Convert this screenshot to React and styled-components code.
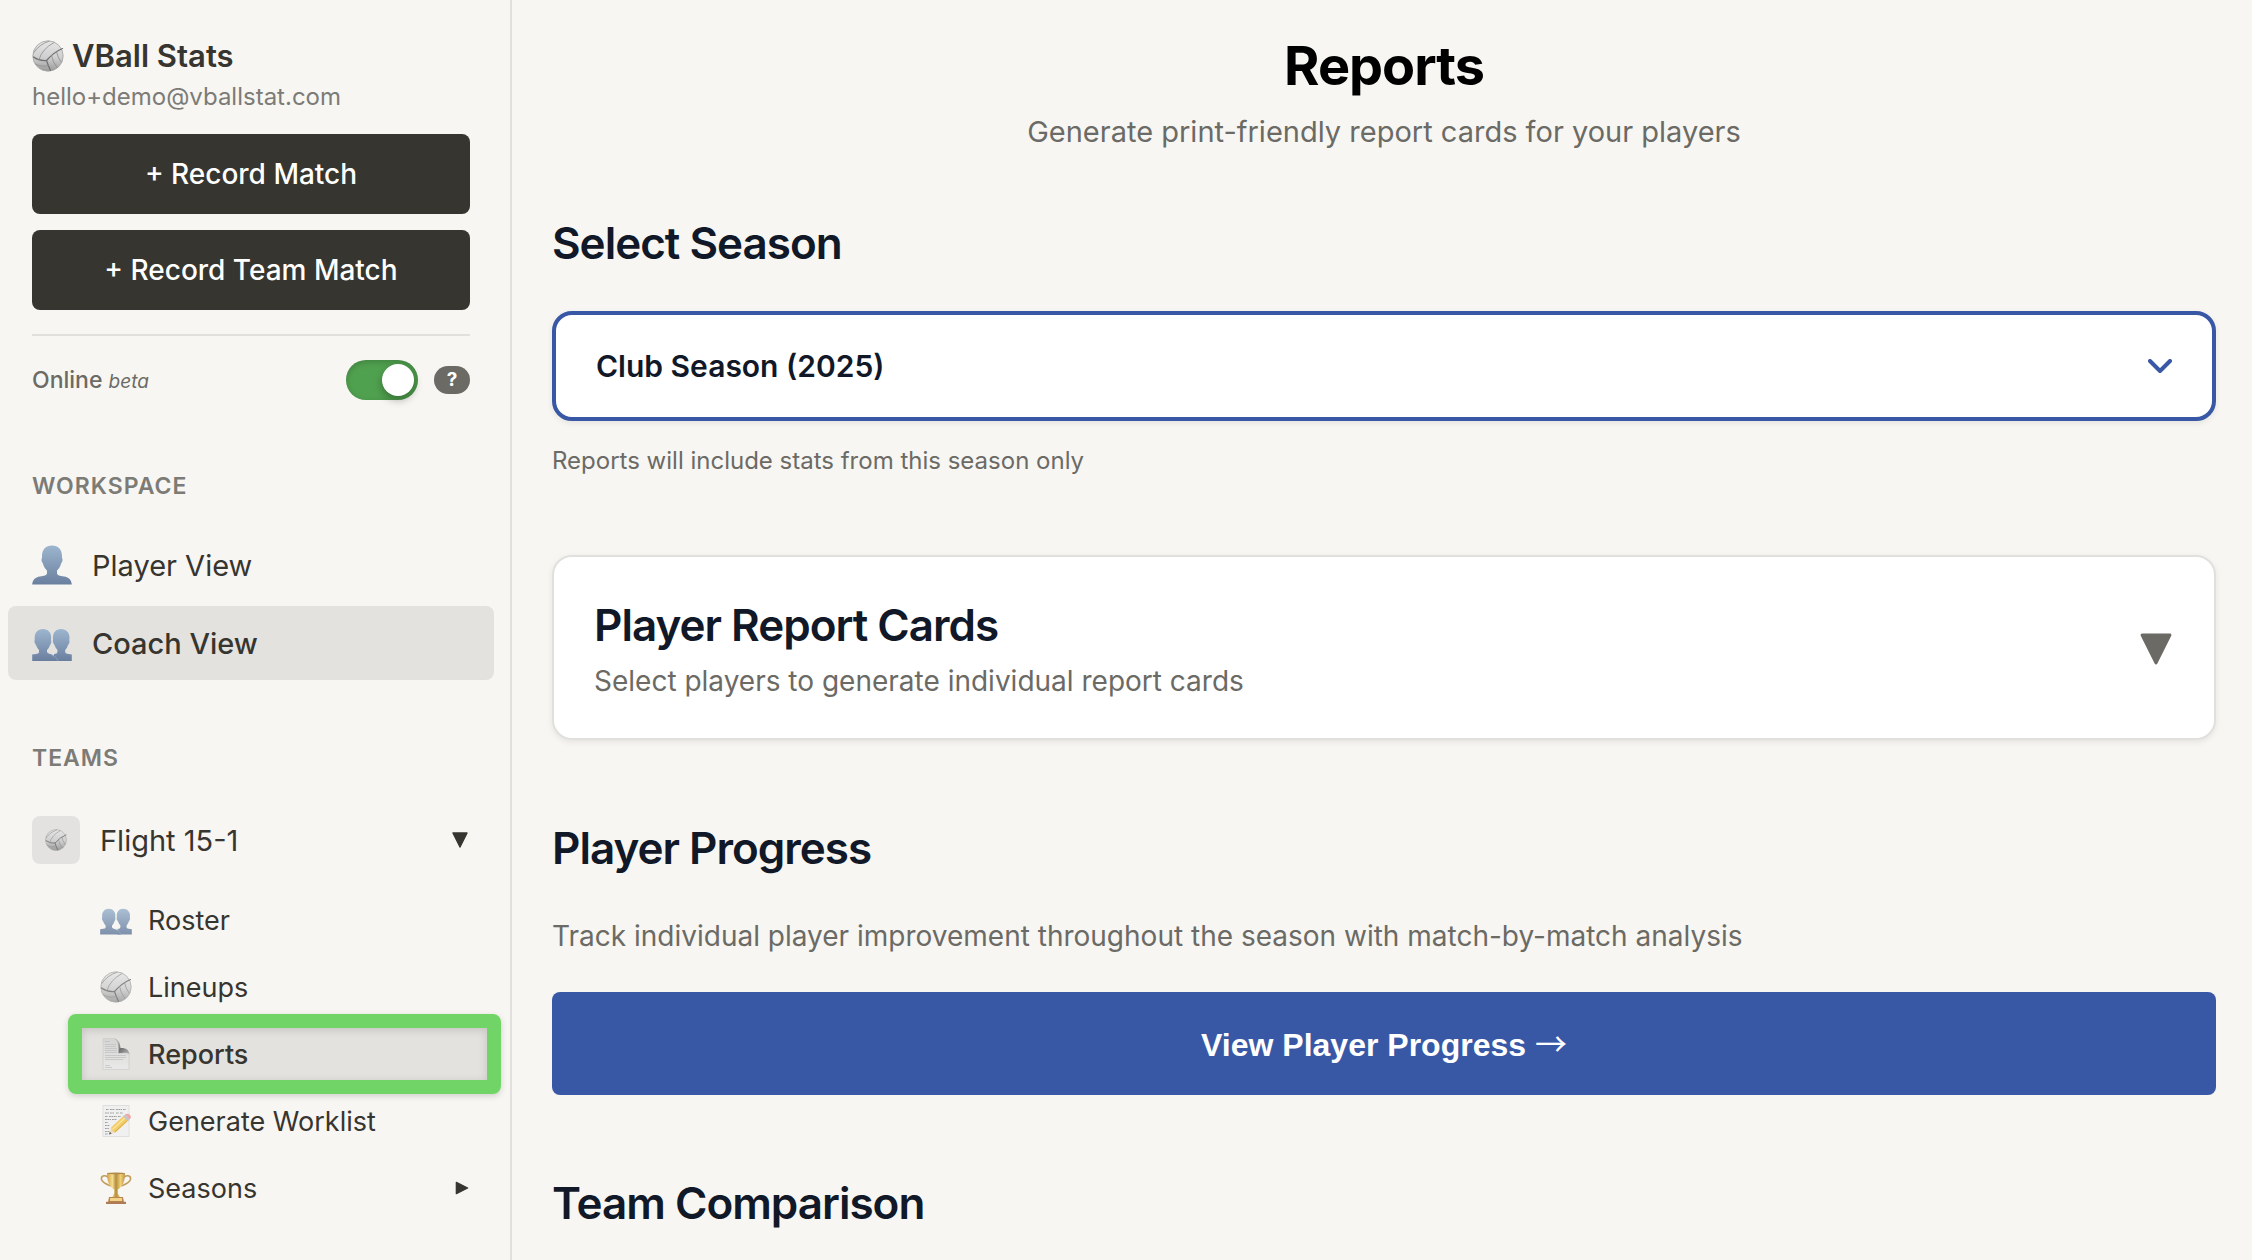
import React, { useState } from "react";
import styled, { createGlobalStyle, css } from "styled-components";

const GlobalStyle = createGlobalStyle`
  * {
    box-sizing: border-box;
  }

  body {
    margin: 0;
    background: #f7f6f3;
    color: #37352f;
    font-family: Inter, "Liberation Sans", sans-serif;
  }

  h1, h2, p, ul {
    margin: 0;
    padding: 0;
  }

  button, select {
    font-family: inherit;
    cursor: pointer;
  }
`;

// Icons
const BallIcon = ({ size }) => (
  <svg width={size} height={size} viewBox="0 0 32 32" aria-hidden="true">
    <defs>
      <linearGradient id="ball" x1="0" y1="0" x2="0" y2="1">
        <stop offset="0" stopColor="#e6e6e6" />
        <stop offset="0.55" stopColor="#cfcfcf" />
        <stop offset="1" stopColor="#9a9a9a" />
      </linearGradient>
    </defs>
    <circle cx="16" cy="16" r="15.2" fill="url(#ball)" stroke="#a3a3a3" strokeWidth="0.8" />
    <g fill="none" strokeLinecap="round">
      <path
        d="M1.5 17 Q8 21.5 14.5 20.5 Q22 12 30.5 8.5 M14.5 20.5 Q16 25 18.5 30.5"
        stroke="#6f6f6f"
        strokeWidth="1.2"
      />
      <path
        d="M7 19.5 Q10 9 22 2.5 M1.8 12.5 Q7 4.5 17 1.2 M19.5 15.5 Q20.5 22 25 27.5 M24.5 11.8 Q25.5 17 29 22 M3.5 24 Q9 27.5 16.5 25.5"
        stroke="#8b8b8b"
        strokeWidth="0.8"
      />
    </g>
  </svg>
);

const PersonIcon = ({ size }) => (
  <svg width={size} height={size} viewBox="0 0 40 40" aria-hidden="true">
    <defs>
      <linearGradient id="person" x1="0" y1="0" x2="0" y2="40" gradientUnits="userSpaceOnUse">
        <stop offset="0" stopColor="#9db6cf" />
        <stop offset="1" stopColor="#6a7f9e" />
      </linearGradient>
    </defs>
    <path
      d="M20 0.5C26 0.5 30 4.5 30 11L30 13C31 14 30.6 17 29.2 18.3C28.3 22 26.5 24 25 25.5L25 28C25 30.5 28 31 32 31.5C37 32.2 39.5 35 39.8 39.5L0.2 39.5C0.5 35 3 32.2 8 31.5C12 31 15 30.5 15 28L15 25.5C13.5 24 11.7 22 10.8 18.3C9.4 17 9 14 10 13L10 11C10 4.5 14 0.5 20 0.5Z"
      fill="url(#person)"
    />
  </svg>
);

const PeopleIcon = ({ size }) => (
  <svg width={size} height={size} viewBox="0 0 40 40" aria-hidden="true">
    <defs>
      <linearGradient id="people" x1="0" y1="6" x2="0" y2="38" gradientUnits="userSpaceOnUse">
        <stop offset="0" stopColor="#9db6cf" />
        <stop offset="1" stopColor="#6a7f9e" />
      </linearGradient>
    </defs>
    <g fill="url(#people)">
      <path d="M29 6C34 6 37.5 9.5 37.5 14.5L37.3 17C38 19 37 21 36 22C35 25 34 26 33.2 27L33.2 29C33.5 31 37 31 39.8 31.5L39.8 38L22 38L22 31C25 31 25.5 30 25.5 28L25.5 27C24 25.5 23 23.5 22.5 22C21 20 20.5 18.5 21 17L21 14.5C21 9.5 24 6 29 6Z" />
      <path d="M11 6C16 6 19.2 9.5 19.2 14.5L19 17C19.7 19 19 21 18 22C17 25 16 26 15 27L15 29C15.5 31.5 24 31 26.5 38L0.2 38L0.2 31.5C4 31 7 31 7 29L7 27C5.5 25.5 4.5 23.5 4 22C2.5 20 2 18.5 2.7 17L2.7 14.5C2.7 9.5 6 6 11 6Z" />
    </g>
    <path d="M19 31.5C22.5 33 25 35 26 38" fill="none" stroke="#91a8c4" strokeWidth="0.7" />
  </svg>
);

const PageIcon = ({ size }) => (
  <svg width={size} height={size} viewBox="0 0 32 32" aria-hidden="true">
    <defs>
      <linearGradient id="curl" x1="0" y1="0" x2="1" y2="1">
        <stop offset="0.2" stopColor="#b5b5b5" />
        <stop offset="0.55" stopColor="#5e5e5e" />
        <stop offset="1" stopColor="#b0b0b0" />
      </linearGradient>
      <linearGradient id="page" x1="0" y1="0" x2="0" y2="1">
        <stop offset="0" stopColor="#d3d3d3" />
        <stop offset="1" stopColor="#ebebeb" />
      </linearGradient>
    </defs>
    <path d="M3 0.5H15Q19 4 19 15H29V31.5H3Z" fill="url(#page)" stroke="#cbcbcb" strokeWidth="0.8" />
    <path
      d="M5 3.5H10M5 6.5H16M5 8.5H16M5 10.5H17M5 12.5H17M5 14.5H17M5 17.5H26M5 19.5H26M5 21.5H23M5 27.5H10M5 29.5H12"
      stroke="#bdbdbd"
      strokeWidth="0.8"
    />
    <path
      d="M14 0.5C18 1 20 4 20.5 10C25 9.5 29 11.5 29.5 16C26 14 23 14.8 18.5 15.3C19 9 18.5 3 14 0.5Z"
      fill="url(#curl)"
    />
  </svg>
);

const MemoIcon = ({ size }) => (
  <svg width={size} height={size} viewBox="0 0 32 32" aria-hidden="true">
    <rect x="3" y="0.5" width="26" height="31" fill="#f0f0f0" stroke="#d6d6d6" strokeWidth="0.8" />
    <path
      d="M6 4.5h3m1 0h5m1 0h6m1 0h3M5 8h4m1 0h4m2 0h3m1 0h3M5 11.5h3m1 0h8m1 0h3M5 14.5h6m1 0h5M5 17.5h3M5 20.5h5M5 23.5h4M5 26.5h5M5 29h3"
      fill="none"
      stroke="#8f8f8f"
      strokeWidth="1.1"
      strokeDasharray="1.8 0.6"
    />
    <path d="M9 29.5L11 22.5L15.5 27.5Z" fill="#ead9bd" />
    <path d="M9 29.5L9.8 26.8L11.7 28.7Z" fill="#444" />
    <path d="M11 22.5L24 10.5L28.5 15.5L15.5 27.5Q12.5 27 11 22.5Z" fill="#f2c64e" />
    <path d="M12.5 24.5L25.7 12.3" stroke="#fbe28f" strokeWidth="1.5" />
    <path d="M15 26.8L28 14.9" stroke="#cf9a32" strokeWidth="0.9" />
    <path d="M23.2 11.2L25 9.5L29.5 14.5L27.7 16.2Z" fill="#b9bcc0" />
    <path d="M25 9.5Q27.5 7.8 30 10Q32 12.5 29.5 14.5Z" fill="#ef9a9d" />
  </svg>
);

const TrophyIcon = ({ size }) => (
  <svg width={size} height={size} viewBox="0 0 32 32" aria-hidden="true">
    <defs>
      <linearGradient id="cup" x1="0" y1="0" x2="1" y2="0">
        <stop offset="0" stopColor="#c8922b" />
        <stop offset="0.3" stopColor="#f6da7c" />
        <stop offset="0.5" stopColor="#a87a1f" />
        <stop offset="0.75" stopColor="#efcb62" />
        <stop offset="1" stopColor="#b9832a" />
      </linearGradient>
    </defs>
    <path
      d="M8 5C4 2.5 0.8 4 1.5 7.5C2.2 10.5 6 12 10.5 14M24 5C28 2.5 31.2 4 30.5 7.5C29.8 10.5 26 12 21.5 14"
      fill="none"
      stroke="#b88c40"
      strokeWidth="1.5"
    />
    <path
      d="M7 1H25C25 9 23 14.5 17.8 17.5V21.5L20 25H12L14.2 21.5V17.5C9 14.5 7 9 7 1Z"
      fill="url(#cup)"
    />
    <ellipse cx="16" cy="1.4" rx="9" ry="0.9" fill="#a5782a" />
    <path d="M9 25H23L24 30H8Z" fill="#b0713a" />
    <rect x="10" y="26" width="12" height="3" fill="#f0cf74" />
    <rect x="6" y="29.8" width="20" height="2.2" fill="#a2663a" />
  </svg>
);

const Triangle = ({ size, right }) => (
  <svg width={size} height={size} viewBox="0 0 16 16" aria-hidden="true">
    <path
      d={right ? "M1.5 1.5L14.5 8L1.5 14.5Z" : "M1 1L15 1L8 15Z"}
      fill="currentColor"
      stroke="currentColor"
      strokeWidth="1.4"
      strokeLinejoin="round"
    />
  </svg>
);

const ChevronIcon = () => (
  <svg width="24" height="14" viewBox="0 0 24 14" aria-hidden="true">
    <path
      d="M2 2L12 12L22 2"
      fill="none"
      stroke="#3858a6"
      strokeWidth="4"
      strokeLinecap="round"
      strokeLinejoin="round"
    />
  </svg>
);

const workspaces = [
  { name: "Player View", icon: PersonIcon },
  { name: "Coach View", icon: PeopleIcon, active: true },
];

const teamLinks = [
  { name: "Roster", icon: PeopleIcon },
  { name: "Lineups", icon: BallIcon },
  { name: "Reports", icon: PageIcon, active: true },
  { name: "Generate Worklist", icon: MemoIcon },
  { name: "Seasons", icon: TrophyIcon, expandable: true },
];

const Sidebar = () => {
  const [online, setOnline] = useState(true);

  return (
    <SidebarAside>
      <Brand>
        <BallIcon size={32} />
        VBall Stats
      </Brand>
      <Email>hello+demo@vballstat.com</Email>
      <RecordButtons>
        <RecordButton type="button">+ Record Match</RecordButton>
        <RecordButton type="button">+ Record Team Match</RecordButton>
      </RecordButtons>
      <OnlineRow>
        <OnlineLabel htmlFor="online">
          Online <em>beta</em>
        </OnlineLabel>
        <Toggle
          id="online"
          type="checkbox"
          checked={online}
          onChange={() => setOnline(!online)}
        />
        <HelpButton type="button" aria-label="About online mode">
          ?
        </HelpButton>
      </OnlineRow>
      <nav>
        <NavHeading>WORKSPACE</NavHeading>
        <WorkspaceList>
          {workspaces.map(({ name, icon: Icon, active }) => (
            <li key={name}>
              <WorkspaceLink href="#" $active={active}>
                <Icon size={40} />
                {name}
              </WorkspaceLink>
            </li>
          ))}
        </WorkspaceList>
        <NavHeading>TEAMS</NavHeading>
        <TeamButton type="button" aria-expanded="true">
          <TeamBadge>
            <BallIcon size={22} />
          </TeamBadge>
          <span>Flight 15-1</span>
          <Triangle size={16} />
        </TeamButton>
        <TeamList>
          {teamLinks.map(({ name, icon: Icon, active, expandable }) => (
            <li key={name}>
              <TeamLink href="#" $active={active}>
                <Icon size={32} />
                <span>{name}</span>
                {expandable && <Triangle size={14} right />}
              </TeamLink>
            </li>
          ))}
        </TeamList>
      </nav>
    </SidebarAside>
  );
};

const App = () => {
  return (
    <Layout>
      <GlobalStyle />
      <Sidebar />
      <Main>
        <PageTitle>Reports</PageTitle>
        <PageSubtitle>
          Generate print-friendly report cards for your players
        </PageSubtitle>
        <SeasonSection>
          <SectionTitle as="label" htmlFor="season">
            Select Season
          </SectionTitle>
          <SelectWrap>
            <SeasonSelect id="season" defaultValue="club-2025">
              <option value="club-2025">Club Season (2025)</option>
            </SeasonSelect>
            <ChevronIcon />
          </SelectWrap>
          <Hint>Reports will include stats from this season only</Hint>
        </SeasonSection>
        <CardButton type="button" aria-expanded="false">
          <CardText>
            <SectionTitle as="span">Player Report Cards</SectionTitle>
            <Description as="span">
              Select players to generate individual report cards
            </Description>
          </CardText>
          <Triangle size={32} />
        </CardButton>
        <Section>
          <SectionTitle>Player Progress</SectionTitle>
          <Description>
            Track individual player improvement throughout the season with
            match-by-match analysis
          </Description>
          <ProgressButton type="button">
            View Player Progress <Arrow>→</Arrow>
          </ProgressButton>
        </Section>
        <Section>
          <SectionTitle>Team Comparison</SectionTitle>
        </Section>
      </Main>
    </Layout>
  );
};

const Layout = styled.div`
  display: flex;
  min-height: 100vh;
`;

const SidebarAside = styled.aside`
  flex: 0 0 512px;
  padding: 32px 40px 24px 32px;
  border-right: 2px solid #e1e0dd;
`;

const Brand = styled.p`
  display: flex;
  align-items: center;
  gap: 8px;
  font-size: 31px;
  font-weight: 600;
  line-height: 48px;
`;

const Email = styled.p`
  color: #7c7b76;
  font-size: 24px;
  line-height: 34px;
`;

const RecordButtons = styled.div`
  display: flex;
  flex-direction: column;
  gap: 16px;
  margin-top: 20px;
  padding-bottom: 24px;
  border-bottom: 2px solid #e1e0dd;
`;

const RecordButton = styled.button`
  padding: 20px;
  border: none;
  border-radius: 8px;
  background: #37352f;
  color: #fff;
  font-size: 28px;
  font-weight: 500;
  line-height: 40px;
`;

const OnlineRow = styled.div`
  display: flex;
  align-items: center;
  gap: 16px;
  height: 64px;
  padding-top: 24px;
`;

const OnlineLabel = styled.label`
  flex: 1;
  color: #6b6a65;
  font-size: 23px;
  font-weight: 500;

  > em {
    font-size: 19px;
    font-weight: 400;
  }
`;

const Toggle = styled.input`
  appearance: none;
  width: 72px;
  height: 40px;
  margin: 0;
  padding: 4px;
  border-radius: 20px;
  background: #b9b8b4;
  box-shadow: inset 0 2px 6px rgba(0, 0, 0, 0.2);
  cursor: pointer;

  &::before {
    content: "";
    display: block;
    width: 32px;
    height: 32px;
    border-radius: 50%;
    background: #fff;
    box-shadow: 0 4px 8px rgba(0, 0, 0, 0.3);
  }

  &:checked {
    background: #50a14f;
  }

  &:checked::before {
    margin-left: auto;
  }
`;

const HelpButton = styled.button`
  width: 36px;
  height: 28px;
  padding: 0;
  border: none;
  border-radius: 14px;
  background: #6b6a65;
  color: #fff;
  font-size: 19px;
  font-weight: 700;
  line-height: 28px;
`;

const NavHeading = styled.h2`
  margin: 61px 0 25px;
  color: #7c7b76;
  font-size: 23px;
  font-weight: 600;
  letter-spacing: 1px;
  line-height: 34px;

  &:first-child {
    margin-top: 69px;
  }
`;

const WorkspaceList = styled.ul`
  display: flex;
  flex-direction: column;
  gap: 4px;
  margin: 0 -24px;
  list-style: none;
`;

const WorkspaceLink = styled.a`
  display: flex;
  align-items: center;
  gap: 20px;
  height: 74px;
  padding: 0 24px;
  border-radius: 8px;
  color: inherit;
  font-size: 29px;
  text-decoration: none;

  ${({ $active }) =>
    $active &&
    css`
      background: #e3e2de;
      font-weight: 500;
    `}
`;

const TeamButton = styled.button`
  display: flex;
  align-items: center;
  gap: 20px;
  width: 100%;
  height: 80px;
  padding: 0 2px 0 0;
  border: none;
  background: none;
  color: inherit;
  font-size: 29px;
  text-align: left;

  > span:nth-child(2) {
    flex: 1;
  }
`;

const TeamBadge = styled.span`
  display: flex;
  align-items: center;
  justify-content: center;
  width: 48px;
  height: 48px;
  border-radius: 8px;
  background: #e3e2e0;
`;

const TeamList = styled.ul`
  display: flex;
  flex-direction: column;
  gap: 3px;
  margin: 8px -23px 0 44px;
  list-style: none;
`;

const TeamLink = styled.a`
  position: relative;
  display: flex;
  align-items: center;
  gap: 16px;
  height: 64px;
  padding: 0 24px;
  color: inherit;
  font-size: 27px;
  text-decoration: none;

  > span {
    flex: 1;
  }

  > svg:first-child {
    opacity: 0.85;
  }

  ${({ $active }) =>
    $active &&
    css`
      background: #e3e2de;
      font-weight: 500;

      &::after {
        content: "";
        position: absolute;
        inset: -8px;
        border: 14px solid #71d466;
        border-radius: 8px;
        box-shadow: 0 2px 6px rgba(0, 0, 0, 0.16),
          inset 0 2px 8px rgba(0, 0, 0, 0.14);
      }
    `}
`;

const Main = styled.main`
  flex: 1;
  min-width: 0;
  padding: 32px 36px 30px 40px;
`;

const PageTitle = styled.h1`
  color: #000;
  font-size: 54px;
  font-weight: 700;
  letter-spacing: -1px;
  line-height: 68px;
  text-align: center;
`;

const PageSubtitle = styled.p`
  margin-top: 10px;
  color: #6b6a65;
  font-size: 29px;
  line-height: 44px;
  text-align: center;
`;

const Section = styled.section`
  margin-top: 80px;
`;

const SeasonSection = styled.section`
  margin-top: 61px;
`;

const SectionTitle = styled.h2`
  display: block;
  color: #111827;
  font-size: 44px;
  font-weight: 600;
  letter-spacing: -1px;
  line-height: 56px;
`;

const SelectWrap = styled.div`
  display: grid;
  align-items: center;
  margin-top: 40px;

  > * {
    grid-area: 1 / 1;
  }

  > svg {
    justify-self: end;
    margin-right: 44px;
    pointer-events: none;
  }
`;

const SeasonSelect = styled.select`
  appearance: none;
  width: 100%;
  height: 110px;
  padding: 0 88px 0 40px;
  border: 4px solid #3858a6;
  border-radius: 20px;
  background: #fff;
  box-shadow: 0 2px 6px rgba(0, 0, 0, 0.08);
  color: #111827;
  font-size: 30px;
  font-weight: 600;
`;

const Hint = styled.p`
  margin-top: 22px;
  color: #6b6a65;
  font-size: 24px;
  line-height: 36px;
`;

const CardButton = styled.button`
  display: flex;
  align-items: center;
  justify-content: space-between;
  width: 100%;
  margin-top: 76px;
  padding: 40px 42px 37px 40px;
  border: 2px solid #e1e0dd;
  border-radius: 20px;
  background: #fff;
  box-shadow: 0 2px 6px rgba(0, 0, 0, 0.08);
  color: #6b6a65;
  text-align: left;
`;

const CardText = styled.span`
  display: flex;
  flex-direction: column;
  gap: 8px;
`;

const Description = styled.p`
  color: #6b6a65;
  font-size: 28px;
  line-height: 40px;

  ${Section} > & {
    margin-top: 40px;
  }
`;

const ProgressButton = styled.button`
  width: 100%;
  margin-top: 36px;
  padding: 30px;
  border: none;
  border-radius: 8px;
  background: #3858a6;
  color: #fff;
  font-family: "Liberation Sans", sans-serif;
  font-size: 32px;
  font-weight: 700;
  line-height: 40px;
`;

const Arrow = styled.span`
  font-family: "Noto Sans CJK JP", sans-serif;
  font-weight: 400;
`;

export default App;
